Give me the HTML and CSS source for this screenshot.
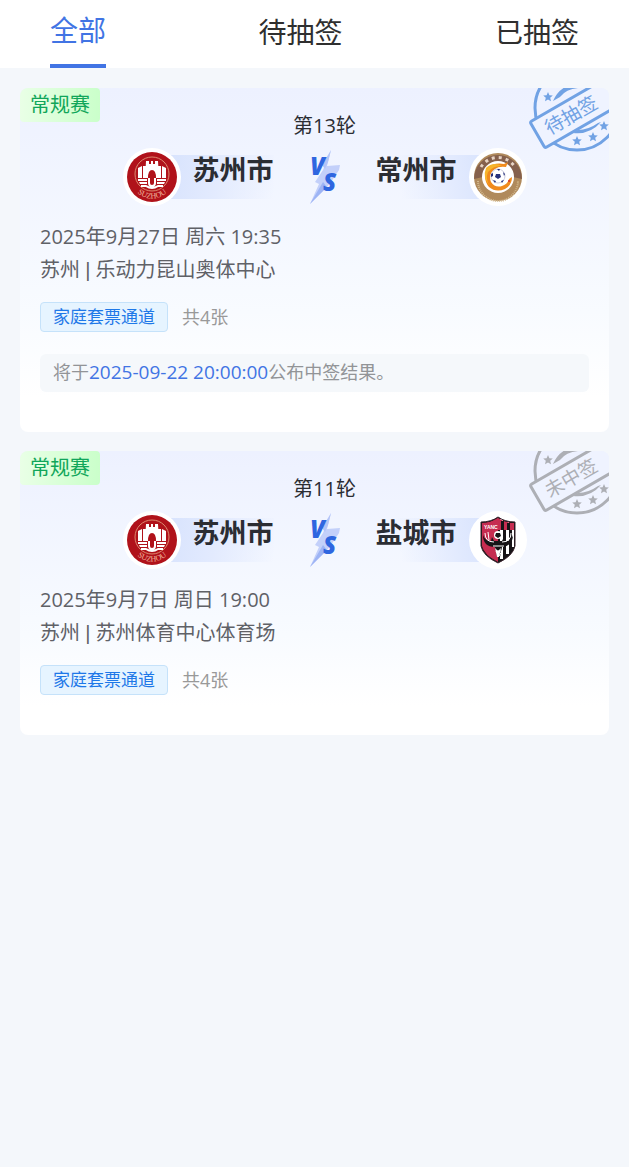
FILE: index.html
```html
<!DOCTYPE html>
<html lang="zh-CN">
<head>
	<meta charset="UTF-8">
	<meta name="viewport" content="width=device-width, initial-scale=1.0">
	<title>抽签记录</title>
	<link rel="stylesheet" href="styles.css">
</head>
<body>
	<!-- shared drawings -->
	<svg class="defs" aria-hidden="true">
		<symbol id="star" viewBox="-5 -5 10 10">
			<path d="M0-5 1.4-1.7 4.8-1.5 2.2.8 3 4.3 0 2.4-3 4.3-2.2.8-4.8-1.5-1.4-1.7Z" fill="currentColor"/>
		</symbol>
		<symbol id="stamp" viewBox="0 0 81 64">
			<circle cx="49" cy="20" r="42" fill="none" stroke="currentColor" stroke-width="3"/>
			<path d="M25 13Q32 -3 50 -5L50 0Q38 1 32 9Z" fill="currentColor"/>
			<path d="M45 45Q62 47 73 34L70 35Q60 42 50 42Z" fill="currentColor"/>
			<use href="#star" x="15" y="4" width="10" height="10"/>
			<use href="#star" x="44" y="48" width="10" height="10"/>
			<use href="#star" x="60" y="44" width="10" height="10"/>
			<use href="#star" x="71" y="33" width="10" height="10"/>
			<rect x="0" y="0" width="104" height="30" rx="2" transform="translate(2 34) rotate(-30)" fill="#eff3ff" stroke="currentColor" stroke-width="3"/>
		</symbol>
		<symbol id="bolt" viewBox="0 0 30 54">
			<path d="M21 0 17 16 30 15 29 20 21 32 17 37 0 54 9 34 5 32 13 20Z" fill="#c3d0fa"/>
			<path d="M13 32 17 37 0 54Z" fill="#9db4f5"/>
			<path d="M21 0 18 12 15 19 12 15Z" fill="#b3c4f8"/>
		</symbol>
		<symbol id="suzhou" viewBox="0 0 50 50">
			<circle cx="25" cy="25" r="25" fill="#b0121a"/>
			<circle cx="25" cy="22" r="17" fill="none" stroke="#dc8a70" stroke-width="1"/>
			<path fill="#fff" d="M11 16l4-2v12h-4zM16 14h3v12h-3zM31 14h3v12h-3zM35 14l4 2v10h-4z"/>
			<path fill="#fff" d="M19 9h3v3h2v-3h2v3h2v-3h3l1 17h-3q0-8-4-8t-4 8h-3z"/>
			<path fill="#fff" d="M11 27h9v2h-9zM12 30h8v2h-7zM30 27h9v2h-9zM30 30h8l-1 2h-7z"/>
			<path fill="none" stroke="#fff" stroke-width="2" d="M22 26v5q0 3 3 3t3-3v-5M14 34h5q6 4 12 0h5"/>
		</symbol>
		<symbol id="changzhou" viewBox="0 0 50 50">
			<circle cx="25" cy="25" r="24" fill="#b08a5c"/>
			<path d="M1 27A24 24 0 1 1 49 27L40 25A15 15 0 0 0 10 25Z" fill="#85604c"/>
			<path d="M8 15A20 20 0 0 1 42 15" fill="none" stroke="#e6d3c4" stroke-width="3" stroke-dasharray="3 4"/>
			<path d="M5 29A20 20 0 0 0 45 29" fill="none" stroke="#d3b98e" stroke-width="2" stroke-dasharray="1 1"/>
			<circle cx="25" cy="25" r="16" fill="#fff"/>
			<path d="M15 17q5-7 16-5l4-2-2 5q-7-1-11 2-7 5-4 13 4 6 11 4 6-2 7-7l3-2q0 8-7 12-9 4-16-2-7-8-1-18Z" fill="#f08a1d"/>
			<path d="M13 16q7-7 16-2-8-1-14 6-3 7 2 14-8-8-4-18Z" fill="#f7b42c"/>
			<circle cx="25" cy="24" r="7" fill="#fff" stroke="#ccd" stroke-width="1"/>
			<path fill="#26317c" d="M23 22h4l1 3-3 2-3-2zM24 17h3l-1 2zM18 22l2-1v3l-2 1zM30 20l2 2-1 2zM20 28l3 1-1 2zM28 29l3-1-2 3z"/>
			<circle cx="36" cy="29" r="1" fill="#d9352c"/>
		</symbol>
		<symbol id="yancheng" viewBox="0 0 50 50">
			<path d="M8 7Q18 7 25 2 32 7 42 7V31Q40 41 25 48 10 41 8 31Z" fill="#171417"/>
			<path d="M9 8Q18 8 25 3V47Q11 40 9 31Z" fill="#c62d51"/>
			<path d="M27 4h3v40h-3zM33 7h3v32h-3zM39 8h2v24h-2z" fill="#fff"/>
			<path d="M9 8Q18 8 25 3 32 8 41 8V15H9Z" fill="#c62d51"/>
			<path d="M28 6h3v9h-3zM34 8h3v7h-3z" fill="#171417"/>
			<path d="M10 20q0 12 12 12l2 10h3l2-10q11-1 11-12-2 7-8 6l-1-4-2 4h-8l-2-4-1 4q-6 0-8-6Z" fill="#171417"/>
			<path d="M12 18q0 9 9 9M15 17l1 8M38 18q0 9-9 9M35 17l-1 8M20 31h11M23 36l3 5 3-5Z" fill="none" stroke="#fff" stroke-width="1"/>
			<circle cx="25" cy="20" r="4" fill="#fff"/>
			<path d="M23 18h4l1 3-3 2-3-2z" fill="#171417"/>
			<path d="M22 33l3 3 3-3-2 9h-2z" fill="#fff"/>
			<path d="M8 7Q18 7 25 2 32 7 42 7V31Q40 41 25 48 10 41 8 31Z" fill="none" stroke="#39242d" stroke-width="1"/>
		</symbol>
		<path id="suzhou-arc" d="M5 32A21 21 0 0 0 45 32"/>
	</svg>

	<nav class="tabs">
		<button class="tab active">全部</button>
		<button class="tab">待抽签</button>
		<button class="tab">已抽签</button>
	</nav>

	<main class="list">
		<article class="card">
			<span class="tag">常规赛</span>
			<svg class="stamp waiting" viewBox="0 0 81 64">
				<use href="#stamp"/>
				<text class="stamp-text" transform="translate(43 27) rotate(-30)">待抽签</text>
			</svg>
			<h2 class="round">第13轮</h2>
			<div class="teams">
				<div class="team home">
					<span class="logo">
						<svg viewBox="0 0 50 50">
							<use href="#suzhou"/>
							<text class="suzhou-text"><textPath href="#suzhou-arc" startOffset="50%">SUZHOU</textPath></text>
						</svg>
					</span>
					<span class="name">苏州市</span>
				</div>
				<svg class="vs" viewBox="0 0 30 54">
					<use href="#bolt"/>
					<text x="0" y="25" class="vs-letter">V</text>
					<text x="13" y="41" class="vs-letter">S</text>
				</svg>
				<div class="team away">
					<span class="name">常州市</span>
					<span class="logo"><svg viewBox="0 0 50 50"><use href="#changzhou"/></svg></span>
				</div>
			</div>
			<div class="info">
				<p>2025年9月27日 周六 19:35</p>
				<p>苏州 <span class="bar">|</span> 乐动力昆山奥体中心</p>
			</div>
			<div class="ticket">
				<span class="channel">家庭套票通道</span>
				<span class="count">共4张</span>
			</div>
			<p class="notice">将于<span class="time">2025-09-22 20:00:00</span>公布中签结果。</p>
		</article>

		<article class="card">
			<span class="tag">常规赛</span>
			<svg class="stamp missed" viewBox="0 0 81 64">
				<use href="#stamp"/>
				<text class="stamp-text" transform="translate(43 27) rotate(-30)">未中签</text>
			</svg>
			<h2 class="round">第11轮</h2>
			<div class="teams">
				<div class="team home">
					<span class="logo">
						<svg viewBox="0 0 50 50">
							<use href="#suzhou"/>
							<text class="suzhou-text"><textPath href="#suzhou-arc" startOffset="50%">SUZHOU</textPath></text>
						</svg>
					</span>
					<span class="name">苏州市</span>
				</div>
				<svg class="vs" viewBox="0 0 30 54">
					<use href="#bolt"/>
					<text x="0" y="25" class="vs-letter">V</text>
					<text x="13" y="41" class="vs-letter">S</text>
				</svg>
				<div class="team away">
					<span class="name">盐城市</span>
					<span class="logo">
						<svg viewBox="0 0 50 50">
							<use href="#yancheng"/>
							<text x="11" y="14" class="yancheng-text">YANC</text>
						</svg>
					</span>
				</div>
			</div>
			<div class="info">
				<p>2025年9月7日 周日 19:00</p>
				<p>苏州 <span class="bar">|</span> 苏州体育中心体育场</p>
			</div>
			<div class="ticket">
				<span class="channel">家庭套票通道</span>
				<span class="count">共4张</span>
			</div>
		</article>
	</main>
</body>
</html>
```
FILE: styles.css
```css
* {
  box-sizing: border-box;
}
body {
  margin: 0;
  min-height: 100vh;
  background-color: #f4f7fb;
  color: #2b2d33;
  font-family: "Open Sans", "Noto Sans CJK SC", sans-serif;
}
p, h2 {
  margin: 0;
}
.defs {
  position: absolute;
  width: 0;
  height: 0;
}
.tabs {
  display: flex;
  justify-content: space-between;
  height: 68px;
  padding: 0 50px;
  background-color: white;
}
.tab {
  padding: 0;
  border: none;
  background: none;
  color: #2f2f2f;
  font-family: inherit;
  font-size: 28px;
  line-height: 64px;
  border-bottom: 4px solid transparent;
  cursor: pointer;
}
.tab.active {
  padding-bottom: 4px;
  line-height: 60px;
  color: #4174e4;
  border-bottom-color: #4174e4;
}
.list {
  display: flex;
  flex-direction: column;
  gap: 19px;
  padding: 20px;
}
.card {
  position: relative;
  padding: 24px 0 40px 20px;
  border-radius: 8px;
  background: linear-gradient(#edf1ff, #f8fbff 65%, #ffffff 90%);
  overflow: hidden;
}
.tag {
  position: absolute;
  top: 0;
  left: 0;
  padding: 0 10px;
  border-radius: 4px;
  background: linear-gradient(90deg, #e9ffe6, #caffca);
  color: #10a65a;
  font-size: 20px;
  line-height: 34px;
}
.stamp {
  position: absolute;
  top: 0;
  right: 0;
  width: 81px;
  height: 64px;
}
.stamp-text {
  fill: currentColor;
  font-size: 19px;
  text-anchor: middle;
  dominant-baseline: central;
}
.waiting {
  color: #71a2e4;
}
.missed {
  color: #adafb5;
}
.round {
  font-size: 20px;
  font-weight: normal;
  line-height: 28px;
  text-align: center;
}
.teams {
  display: flex;
  justify-content: center;
  align-items: center;
  gap: 36px;
  margin-top: 8px;
}
.team {
  display: flex;
  align-items: center;
}
.logo {
  display: flex;
  justify-content: center;
  align-items: center;
  width: 58px;
  height: 58px;
  border-radius: 50%;
  background-color: white;
  z-index: 1;
}
.logo svg {
  width: 50px;
  height: 50px;
}
.name {
  height: 44px;
  font-size: 27px;
  font-weight: bold;
  line-height: 30px;
}
.home .name {
  margin-left: -28px;
  padding-left: 40px;
  background: linear-gradient(100deg, #d5e1fd, #e2eafe 50%, transparent);
}
.away .name {
  margin-right: -28px;
  padding-right: 40px;
  background: linear-gradient(260deg, #d5e1fd, #e2eafe 35%, transparent 80%);
}
.vs {
  width: 30px;
  height: 54px;
  overflow: visible;
}
.vs-letter {
  fill: #2f66e0;
  font-family: "Open Sans", sans-serif;
  font-size: 24px;
  font-style: italic;
  font-weight: 800;
}
.info {
  margin-top: 14px;
  color: #5f6167;
  font-size: 20px;
  line-height: 33px;
}
.bar {
  font-family: "Liberation Sans", sans-serif;
  line-height: 1;
}
.ticket {
  display: flex;
  align-items: center;
  gap: 14px;
  margin-top: 16px;
}
.channel {
  padding: 0 12px;
  border: 1px solid #c5e2fa;
  border-radius: 4px;
  background-color: #e6f4ff;
  color: #1e78e8;
  font-size: 17px;
  line-height: 28px;
}
.count {
  color: #999;
  font-size: 18px;
  line-height: 28px;
}
.notice {
  margin: 22px 20px 0 0;
  padding: 0 13px 2px;
  border-radius: 6px;
  background-color: #f5f8fb;
  color: #929497;
  font-size: 18px;
  line-height: 36px;
}
.time {
  color: #4174e4;
  font-size: 19px;
}
.suzhou-text {
  fill: #f0b49a;
  font-family: "Liberation Serif", serif;
  font-size: 8px;
  text-anchor: middle;
}
.yancheng-text {
  fill: white;
  font-family: "Liberation Sans", sans-serif;
  font-size: 5px;
  font-weight: bold;
}
```
